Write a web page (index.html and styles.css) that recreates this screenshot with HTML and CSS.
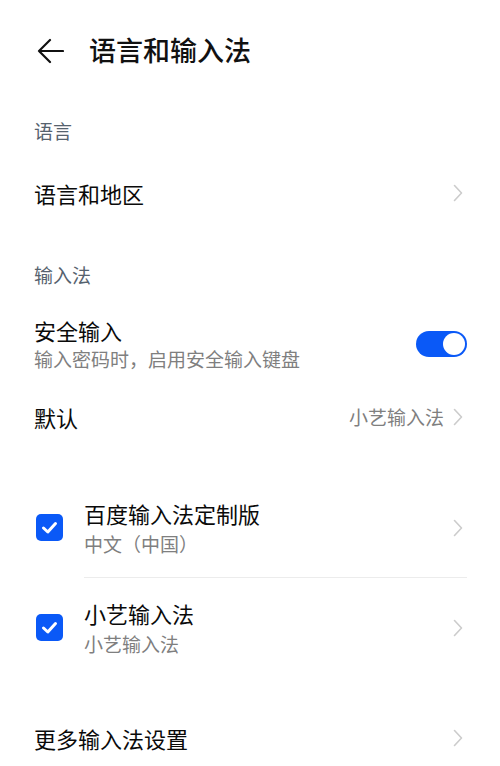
FILE: index.html
```html
<!DOCTYPE html>
<html lang="zh-CN">
<head>
<meta charset="utf-8">
<title>语言和输入法</title>
<link rel="stylesheet" href="styles.css">
</head>
<body>
<div class="page">
  <header class="header">
    <svg class="back" width="28" height="28" viewBox="0 0 28 28"><path d="M27 14H3M14 3L3 14L14 25" fill="none" stroke="#111" stroke-width="2.2" stroke-linecap="round" stroke-linejoin="round"/></svg>
    <h1 class="title">语言和输入法</h1>
  </header>

  <div class="label label-first">语言</div>
  <div class="row row-single">
    <span class="main">语言和地区</span>
    <svg class="chev" width="10" height="18" viewBox="0 0 10 18"><path d="M1.5 1.5L8.5 9L1.5 16.5" fill="none" stroke="#cccccc" stroke-width="1.6" stroke-linecap="round" stroke-linejoin="round"/></svg>
  </div>

  <div class="label label-second">输入法</div>
  <div class="row row-two">
    <div class="texts">
      <div class="main">安全输入</div>
      <div class="sub">输入密码时，启用安全输入键盘</div>
    </div>
    <div class="toggle"><span class="knob"></span></div>
  </div>
  <div class="row row-default">
    <span class="main">默认</span>
    <span class="right">
      <span class="value">小艺输入法</span>
      <svg class="chev" width="10" height="18" viewBox="0 0 10 18"><path d="M1.5 1.5L8.5 9L1.5 16.5" fill="none" stroke="#cccccc" stroke-width="1.6" stroke-linecap="round" stroke-linejoin="round"/></svg>
    </span>
  </div>

  <div class="list">
    <div class="item">
      <span class="check"><svg width="27" height="27" viewBox="0 0 27 27"><path d="M7.5 14L11.8 18L19.5 9.5" fill="none" stroke="#fff" stroke-width="3" stroke-linecap="round" stroke-linejoin="round"/></svg></span>
      <div class="item-body">
        <div class="texts">
          <div class="main">百度输入法定制版</div>
          <div class="sub">中文（中国）</div>
        </div>
        <svg class="chev" width="10" height="18" viewBox="0 0 10 18"><path d="M1.5 1.5L8.5 9L1.5 16.5" fill="none" stroke="#cccccc" stroke-width="1.6" stroke-linecap="round" stroke-linejoin="round"/></svg>
      </div>
    </div>
    <div class="divider"></div>
    <div class="item">
      <span class="check"><svg width="27" height="27" viewBox="0 0 27 27"><path d="M7.5 14L11.8 18L19.5 9.5" fill="none" stroke="#fff" stroke-width="3" stroke-linecap="round" stroke-linejoin="round"/></svg></span>
      <div class="item-body">
        <div class="texts">
          <div class="main">小艺输入法</div>
          <div class="sub">小艺输入法</div>
        </div>
        <svg class="chev" width="10" height="18" viewBox="0 0 10 18"><path d="M1.5 1.5L8.5 9L1.5 16.5" fill="none" stroke="#cccccc" stroke-width="1.6" stroke-linecap="round" stroke-linejoin="round"/></svg>
      </div>
    </div>
  </div>

  <div class="row row-more">
    <span class="main">更多输入法设置</span>
    <svg class="chev" width="10" height="18" viewBox="0 0 10 18"><path d="M1.5 1.5L8.5 9L1.5 16.5" fill="none" stroke="#cccccc" stroke-width="1.6" stroke-linecap="round" stroke-linejoin="round"/></svg>
  </div>
</div>
</body>
</html>
```

FILE: styles.css
```css
html, body {
  margin: 0;
  padding: 0;
  background: #ffffff;
}
body {
  font-family: "Noto Sans CJK SC", "Noto Sans", sans-serif;
  color: #111111;
}
.page {
  width: 500px;
  height: 766px;
  overflow: hidden;
}
.header {
  height: 100px;
  display: flex;
  align-items: center;
  padding-left: 36px;
  box-sizing: border-box;
}
.back {
  display: block;
  margin-top: 1px;
}
.title {
  margin: 0 0 0 25px;
  font-size: 27px;
  font-weight: 500;
  line-height: 34px;
  color: #111;
}
.label {
  padding: 0 34px;
  font-size: 19px;
  line-height: 24px;
  color: #56626e;
}
.label-first {
  padding-top: 19px;
  padding-bottom: 19px;
}
.label-second {
  padding-top: 37px;
  padding-bottom: 14px;
}
.row {
  display: flex;
  align-items: center;
  justify-content: space-between;
  padding: 0 33px 0 34px;
  box-sizing: border-box;
}
.main {
  font-size: 22px;
  font-weight: 400;
  line-height: 30px;
  color: #0a0a0a;
}
.sub {
  font-size: 19px;
  line-height: 26px;
  margin-top: 1px;
  color: #7f7f7f;
}
.row-single {
  height: 62px;
  margin-bottom: 2px;
}
.row-two {
  padding-top: 14px;
  padding-bottom: 14px;
}
.row-default {
  height: 62px;
}
.row-more {
  height: 64px;
  margin-top: 29px;
}
.chev {
  display: block;
  margin-right: 4px;
  flex: none;
}
.right {
  display: flex;
  align-items: center;
  gap: 9px;
}
.value {
  font-size: 19px;
  line-height: 26px;
  color: #7f7f7f;
}
.toggle {
  width: 51px;
  height: 26px;
  border-radius: 13px;
  background: #0a59f7;
  display: flex;
  align-items: center;
  justify-content: flex-end;
  padding-right: 2px;
  box-sizing: border-box;
}
.knob {
  width: 22px;
  height: 22px;
  border-radius: 50%;
  background: #ffffff;
}
.list {
  margin-top: 30px;
}
.item {
  display: flex;
  align-items: center;
  padding-left: 36px;
}
.check {
  width: 27px;
  height: 27px;
  border-radius: 5px;
  background: #0a59f7;
  flex: none;
  display: block;
}
.check svg {
  display: block;
}
.item-body {
  flex: 1;
  margin-left: 21px;
  display: flex;
  align-items: center;
  justify-content: space-between;
  padding: 20px 33px 20px 0;
}
.item .sub {
  margin-top: 3px;
}
.divider {
  height: 1px;
  background: #ececec;
  margin: 0 33px 0 84px;
}
```
